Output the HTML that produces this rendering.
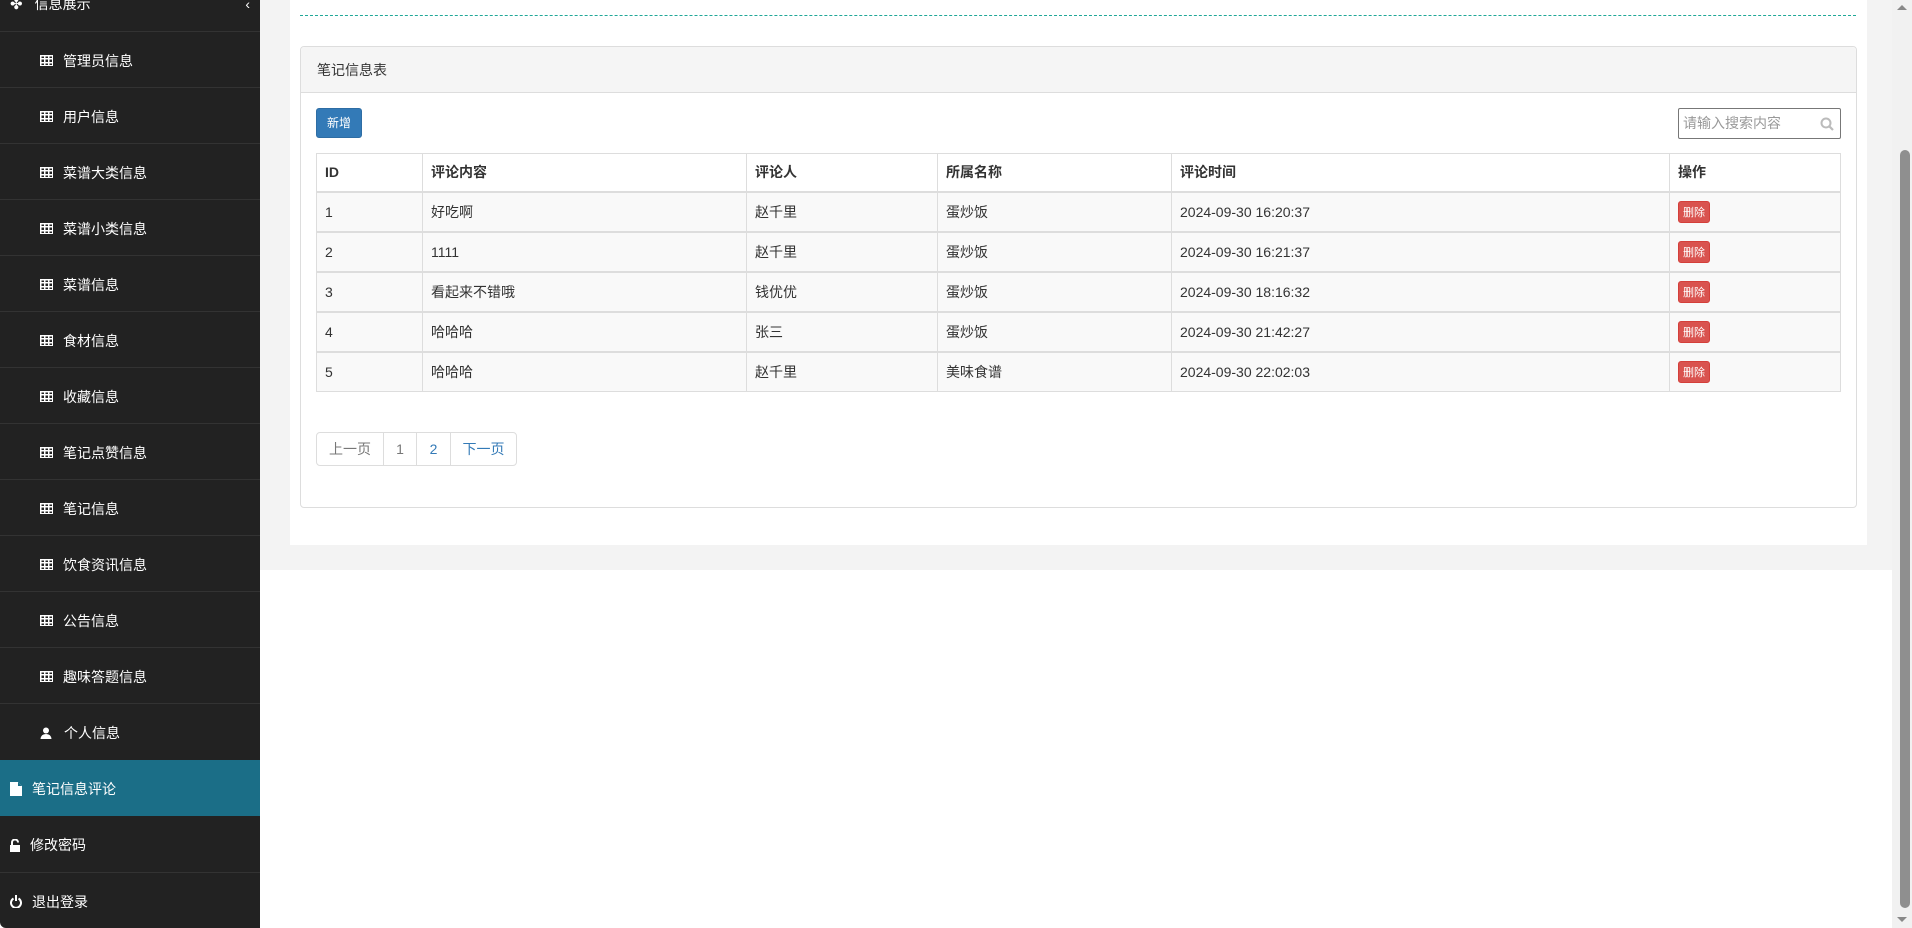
<!DOCTYPE html>
<html><head><meta charset="utf-8">
<style>
*{box-sizing:border-box;margin:0;padding:0}
html,body{width:1912px;height:928px;overflow:hidden;background:#fff;font-family:"Liberation Sans","Noto Sans CJK SC",sans-serif;font-size:14px;color:#333}
.side{position:absolute;left:0;top:0;width:260px;height:928px;background:#222;border-bottom-left-radius:6px}
.item{position:absolute;left:0;width:260px;height:56px;border-top:1px solid #333;color:#fff;font-size:14px;display:flex;align-items:center;padding-top:2px}
.sub{padding-left:40px}
.sub .ic{width:13px;height:11px;margin-right:10px;display:inline-block;background:
linear-gradient(#fff,#fff) 0 0/13px 1.5px no-repeat,
linear-gradient(#fff,#fff) 0 3.3px/13px 1.5px no-repeat,
linear-gradient(#fff,#fff) 0 6.6px/13px 1.5px no-repeat,
linear-gradient(#fff,#fff) 0 9.5px/13px 1.5px no-repeat,
linear-gradient(#fff,#fff) 0 0/1.5px 11px no-repeat,
linear-gradient(#fff,#fff) 4px 0/1.5px 11px no-repeat,
linear-gradient(#fff,#fff) 8px 0/1.5px 11px no-repeat,
linear-gradient(#fff,#fff) 11.5px 0/1.5px 11px no-repeat}
.top{padding-left:10px}
.main{position:absolute;left:260px;top:0;width:1632px;height:570px;background:#f3f3f3}
.panel{position:absolute;left:290px;top:0;width:1577px;height:545px;background:#fff}
.dash{position:absolute;left:300px;top:15px;width:1556px;border-top:1px dashed #20a898}
.card{position:absolute;left:300px;top:46px;width:1557px;height:462px;border:1px solid #ddd;border-radius:4px;background:#fff}
.ch{height:46px;background:#f5f5f5;border-bottom:1px solid #ddd;padding-left:16px;line-height:46px;font-size:14px;color:#333;border-radius:4px 4px 0 0}
.btn{position:absolute;left:316px;top:108px;width:46px;height:30px;background:#337ab7;border:1px solid #2e6da4;border-radius:3px;color:#fff;font-size:12px;text-align:center;line-height:28px}
.search{position:absolute;left:1678px;top:108px;width:163px;height:31px;border:1px solid #777;border-radius:2px;font-size:14px;color:#999;padding-left:4px;line-height:29px}
table{position:absolute;left:316px;top:153px;width:1525px;border-collapse:collapse}
td,th{border:1px solid #ddd;text-align:left;padding:0 8px;font-size:14px;height:40px}
th{font-weight:bold;height:38px;border-bottom:2px solid #ddd;background:#fff}
tbody tr{background:#f9f9f9}
tbody td{border-top:2px solid #ddd}
.del{display:inline-block;background:#d9534f;color:#fff;font-size:11px;border-radius:3px;padding:0 4px;height:22px;line-height:22px;border:1px solid #d43f3a}
.pg{position:absolute;left:316px;top:432px;height:34px;display:flex;border:1px solid #ddd;border-radius:4px}
.pg span{display:block;height:32px;line-height:32px;text-align:center;border-left:1px solid #ddd;color:#337ab7;font-size:14px}
.pg span:first-child{border-left:none;color:#777}
.sb{position:absolute;left:1892px;top:0;width:20px;height:928px;background:#f1f1f1}
.thumb{position:absolute;left:1900px;top:150px;width:10px;height:758px;background:#8f8f8f;border-radius:5px}
</style></head><body>
<div class="side">
  <div class="item top" style="top:-25px;border-top:none"><span style="font-size:15px;margin-right:12px">✤</span>信息展示<span style="position:absolute;right:10px;font-size:14px">‹</span></div>
  <div class="item sub" style="top:31px"><i class="ic"></i>管理员信息</div>
  <div class="item sub" style="top:87px"><i class="ic"></i>用户信息</div>
  <div class="item sub" style="top:143px"><i class="ic"></i>菜谱大类信息</div>
  <div class="item sub" style="top:199px"><i class="ic"></i>菜谱小类信息</div>
  <div class="item sub" style="top:255px"><i class="ic"></i>菜谱信息</div>
  <div class="item sub" style="top:311px"><i class="ic"></i>食材信息</div>
  <div class="item sub" style="top:367px"><i class="ic"></i>收藏信息</div>
  <div class="item sub" style="top:423px"><i class="ic"></i>笔记点赞信息</div>
  <div class="item sub" style="top:479px"><i class="ic"></i>笔记信息</div>
  <div class="item sub" style="top:535px"><i class="ic"></i>饮食资讯信息</div>
  <div class="item sub" style="top:591px"><i class="ic"></i>公告信息</div>
  <div class="item sub" style="top:647px"><i class="ic"></i>趣味答题信息</div>
  <div class="item sub" style="top:703px"><svg width="12" height="12" viewBox="0 0 12 12" style="margin-right:12px"><circle cx="6" cy="3.5" r="3" fill="#fff"/><path d="M0.5 12 Q1 7 6 7 Q11 7 11.5 12Z" fill="#fff"/></svg>个人信息</div>
  <div class="item" style="top:760px;height:56px;background:#1b6e87;border-top:none;padding-left:10px"><svg width="12" height="14" viewBox="0 0 12 14" style="margin-right:10px"><path d="M0 0H8L12 4V14H0Z" fill="#fff"/><path d="M8 0V4H12" fill="#1b6e87"/></svg>笔记信息评论</div>
  <div class="item" style="top:816px;border-top:none;padding-left:10px"><svg width="11" height="13" viewBox="0 0 11 13" style="margin-right:9px"><path d="M2 6V3.5A3 3 0 0 1 8 3.5" stroke="#fff" stroke-width="2" fill="none"/><rect x="0" y="6" width="10" height="7" fill="#fff"/></svg>修改密码</div>
  <div class="item" style="top:872px;padding-left:10px"><svg width="12" height="13" viewBox="0 0 12 13" style="margin-right:10px"><path d="M3.5 3.5A5 5 0 1 0 8.5 3.5" stroke="#fff" stroke-width="2" fill="none"/><line x1="6" y1="0" x2="6" y2="6" stroke="#fff" stroke-width="2"/></svg>退出登录</div>
</div>
<div class="main"></div>
<div class="panel"></div>
<div class="dash"></div>
<div class="card"><div class="ch">笔记信息表</div></div>
<div class="btn">新增</div>
<div class="search">请输入搜索内容<svg width="14" height="14" viewBox="0 0 14 14" style="position:absolute;right:6px;top:8px"><circle cx="6" cy="6" r="4.5" stroke="#bbb" stroke-width="2" fill="none"/><line x1="9.3" y1="9.3" x2="13" y2="13" stroke="#bbb" stroke-width="2.2"/></svg></div>
<table>
<colgroup><col style="width:106px"><col style="width:324px"><col style="width:191px"><col style="width:234px"><col style="width:498px"><col></colgroup>
<thead><tr><th>ID</th><th>评论内容</th><th>评论人</th><th>所属名称</th><th>评论时间</th><th>操作</th></tr></thead>
<tbody>
<tr><td>1</td><td>好吃啊</td><td>赵千里</td><td>蛋炒饭</td><td>2024-09-30 16:20:37</td><td><span class="del">删除</span></td></tr>
<tr><td>2</td><td>1111</td><td>赵千里</td><td>蛋炒饭</td><td>2024-09-30 16:21:37</td><td><span class="del">删除</span></td></tr>
<tr><td>3</td><td>看起来不错哦</td><td>钱优优</td><td>蛋炒饭</td><td>2024-09-30 18:16:32</td><td><span class="del">删除</span></td></tr>
<tr><td>4</td><td>哈哈哈</td><td>张三</td><td>蛋炒饭</td><td>2024-09-30 21:42:27</td><td><span class="del">删除</span></td></tr>
<tr><td>5</td><td>哈哈哈</td><td>赵千里</td><td>美味食谱</td><td>2024-09-30 22:02:03</td><td><span class="del">删除</span></td></tr>
</tbody></table>
<div class="pg"><span style="width:66px">上一页</span><span style="width:33px;color:#777">1</span><span style="width:34px">2</span><span style="width:66px">下一页</span></div>
<div class="sb"></div>
<div style="position:absolute;left:1897px;top:5px;width:0;height:0;border-left:5px solid transparent;border-right:5px solid transparent;border-bottom:5px solid #888"></div>
<div style="position:absolute;left:1897px;top:917px;width:0;height:0;border-left:5px solid transparent;border-right:5px solid transparent;border-top:5px solid #888"></div>
<div class="thumb"></div>
</body></html>
